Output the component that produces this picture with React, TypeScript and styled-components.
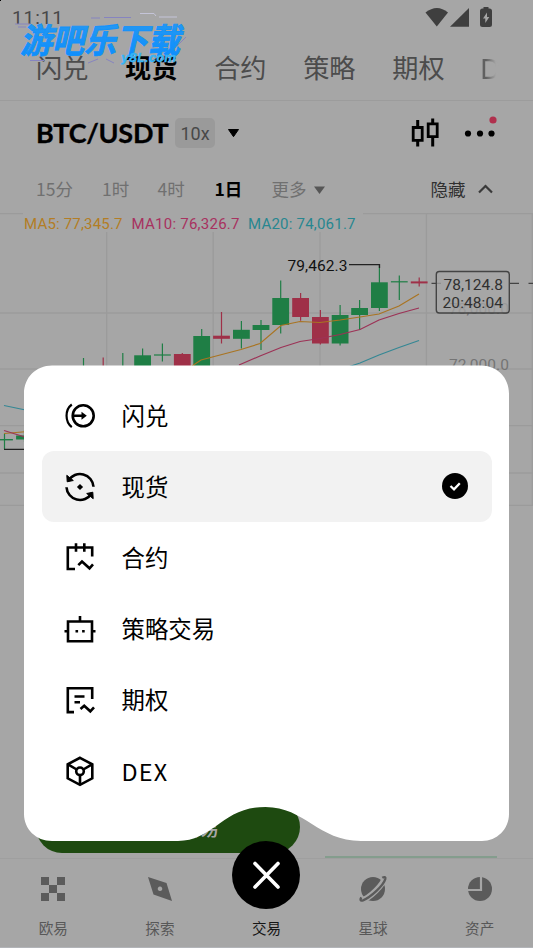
import React from "react";
import styled, { createGlobalStyle } from "styled-components";

const CJK = '"Noto Sans CJK SC", sans-serif';
const LATIN = 'Lato, "Noto Sans CJK SC", sans-serif';

const GlobalStyle = createGlobalStyle`
  * { box-sizing: border-box; }
  html, body { margin: 0; padding: 0; background: #a6a6a6; }
  body { font-family: ${CJK}; overflow: hidden; }
  svg { display: block; flex: none; }
`;

const Phone = styled.main`
  position: relative;
  width: 533px;
  height: 948px;
  display: flex;
  flex-direction: column;
  overflow: hidden;
  background: #a6a6a6;
  color: #000;
`;

const StatusBar = styled.header`
  height: 36px;
  flex: none;
  display: flex;
  justify-content: space-between;
  padding: 0 40px 0 12px;
`;

const Clock = styled.span`
  font: 400 19px/36px Roboto, sans-serif;
  letter-spacing: 0.9px;
  color: #484848;
`;

const TopTabs = styled.nav`
  height: 65px;
  flex: none;
  display: flex;
  gap: 36.7px;
  padding-left: 36px;
  border-bottom: 1px solid #9c9c9c;
`;

const TopTab = styled.span<{ $active?: boolean }>`
  flex: none;
  font-size: 26.2px;
  line-height: 62px;
  font-weight: ${(p) => (p.$active ? 700 : 400)};
  color: ${(p) => (p.$active ? "#000" : "#4c4c4c")};
`;

const FadedTab = styled(TopTab)`
  margin-left: -1px;
  font-family: ${LATIN};
  line-height: 66px;
  background: linear-gradient(90deg, #606060 30%, #a6a6a6 80%);
  background-clip: text;
  -webkit-background-clip: text;
  color: transparent;
`;

const PairBar = styled.section`
  height: 64px;
  flex: none;
  display: flex;
  align-items: center;
  padding: 0 36px;
`;

const PairName = styled.h1`
  margin: 0;
  width: 139px;
  font: 700 27px/38px ${LATIN};
  letter-spacing: -0.25px;
  white-space: nowrap;
  -webkit-text-stroke: 0.3px #000;
`;

const Leverage = styled.span`
  width: 40px;
  height: 30px;
  margin-right: 12px;
  border-radius: 5px;
  background: #9a9a9a;
  color: #484848;
  text-align: center;
  font: 400 18px/31px Roboto, sans-serif;
`;

const PairActions = styled.div`
  margin-left: auto;
  display: flex;
  align-items: center;
  gap: 24px;
`;

const Intervals = styled.section`
  height: 48px;
  flex: none;
  display: grid;
  grid-template-columns: 66px 55.5px 57px 57px 159px auto;
  align-items: center;
  padding: 0 0 0 36px;
`;

const Interval = styled.span<{ $tone?: "active" | "dark" }>`
  display: flex;
  align-items: center;
  gap: 7px;
  font-size: 17.5px;
  line-height: 24px;
  font-weight: ${(p) => (p.$tone === "active" ? 700 : 400)};
  color: ${(p) => (p.$tone === "active" ? "#000" : p.$tone === "dark" ? "#303030" : "#707070")};
`;

const Chart = styled.svg`
  width: 533px;
  height: 588px;
`;

const OrderArea = styled.section`
  height: 57px;
  flex: none;
  display: flex;
  justify-content: space-between;
  align-items: flex-end;
  padding: 0 36px;
`;

const BuyButton = styled.div`
  width: 264px;
  height: 52px;
  margin-bottom: 5px;
  border-radius: 26px;
  background: #1e4a10;
  color: #a6a6a6;
  font-size: 20px;
  line-height: 54px;
  font-weight: 500;
  padding-right: 81px;
  text-align: right;
`;

const DepthBar = styled.div`
  width: 172px;
  height: 2.5px;
  background: #849d8d;
`;

const BottomNav = styled.nav`
  height: 90px;
  flex: none;
  display: grid;
  grid-template-columns: repeat(5, 1fr);
  border-top: 1px solid #9f9f9f;
  border-bottom: 1px solid #b2b4b8;
`;

const NavItem = styled.div<{ $active?: boolean }>`
  display: flex;
  flex-direction: column;
  align-items: center;
  padding-top: 14px;
  font-size: 14.6px;
  line-height: 21px;
  color: ${(p) => (p.$active ? "#161616" : "#585858")};
`;

const NavIcon = styled.svg`
  width: 32px;
  height: 32px;
  margin-bottom: 12px;
  fill: #5b5b5b;
`;

const Menu = styled.div`
  position: absolute;
  left: 24px;
  top: 365px;
  width: 485px;
  height: 476px;
  padding: 15px 17.5px 0;
  background: #fff;
  clip-path: path(
    "M28 0.5H457C473 0.5 485 12.5 485 28.5V449C485 464 473 476 458 476H337C294 476 281 442 241.500 442C198 442 190 476 154 476H28C12 476 0 464 0 449V28.5C0 12.5 12 0.5 28 0.5Z"
  );
`;

const MenuRow = styled.div<{ $selected?: boolean }>`
  height: 71.2px;
  display: flex;
  align-items: center;
  padding: 0 24px 0 22.5px;
  border-radius: 12px;
  background: ${(p) => (p.$selected ? "#f2f2f2" : "transparent")};
`;

const MenuIcon = styled.svg`
  width: 32px;
  height: 32px;
  fill: none;
  stroke: #000;
  stroke-width: 2.6;
`;

const MenuLabel = styled.span<{ $latin?: boolean }>`
  flex: 1;
  margin-left: 25.5px;
  padding-bottom: 2px;
  font-size: 23.4px;
  line-height: 34px;
  letter-spacing: ${(p) => (p.$latin ? "1.2px" : "0")};
`;

const CloseButton = styled.div`
  position: absolute;
  left: 232px;
  top: 841px;
  width: 68px;
  height: 68px;
  border-radius: 50%;
  background: #000;
`;

const Watermark = styled.svg`
  position: absolute;
  left: 15px;
  top: 8px;
`;

const CornerMark = styled.i`
  position: absolute;
  left: 0;
  top: 0;
  width: 1px;
  height: 1px;
  background: #000;
`;

const GREEN = "#1f7e45";
const RED = "#9f3048";

type Candle = [center: number, high: number, low: number, top: number, bottom: number, color: string];

const candles: Candle[] = [
  [4.5, 434, 449, 439, 440.4, GREEN],
  [24.5, 430, 442, 435.5, 439.5, GREEN],
  [83.5, 358, 380, 366, 380, GREEN],
  [103.2, 357.5, 380, 366, 380, RED],
  [122.8, 353, 380, 366, 380, GREEN],
  [142.6, 348.5, 380, 355.3, 380, GREEN],
  [162.4, 343.5, 361.5, 354.4, 355.6, GREEN],
  [182.3, 353, 380, 354, 380, RED],
  [201.7, 329, 380, 336, 380, GREEN],
  [221.5, 312, 343.5, 335.7, 338.8, RED],
  [241.4, 321, 348.5, 329.8, 338.8, GREEN],
  [261, 320, 350, 325, 330, GREEN],
  [280.7, 280.5, 333.5, 298, 325, GREEN],
  [300.6, 293, 320.7, 298, 317, RED],
  [320.4, 310, 344.5, 317, 343.5, RED],
  [340.1, 305, 345.5, 315, 343.5, GREEN],
  [359.6, 300, 330, 308, 315, GREEN],
  [379.4, 264.5, 311, 282.3, 308, GREEN],
  [399.3, 275.5, 300, 281.2, 282.4, GREEN],
  [419.2, 277.5, 286.5, 281.4, 283.4, RED],
];

const averages = [
  { color: "#a97422", points: "192,366 201,360 241,349.500 260,343.500 281,325.500 300,321.500 320,322.500 340,320 360,317 379,314 399,306 419,294" },
  { color: "#a97422", points: "4,433.500 28,431.500" },
  { color: "#9c3256", points: "239,365 260,356 281,347.500 300,341.500 320,338.500 340,334.500 360,329.500 379,320 399,313.500 419,308" },
  { color: "#9c3256", points: "4,430.500 28,438" },
  { color: "#348794", points: "348,367 360,363 379,355 399,347.500 419,340.500" },
  { color: "#348794", points: "4,405.500 28,410.500" },
];

const legends = [
  { x: 24, width: 98.5, color: "#b37d24", text: "MA5: 77,345.7" },
  { x: 131.5, width: 108, color: "#a83260", text: "MA10: 76,326.7" },
  { x: 248, width: 107.5, color: "#288690", text: "MA20: 74,061.7" },
];

function PriceChart() {
  return (
    <Chart viewBox="0 213 533 588" fontFamily="Roboto, sans-serif" fontSize="15.500">
      <g stroke="#9b9b9b" strokeWidth="1.300">
        {[213.5, 313, 369, 425.6, 473, 505.4].map((y) => (
          <line key={y} x1="0" x2="533" y1={y} y2={y} />
        ))}
        {[106.7, 213.2, 320, 426.4, 532.3].map((x) => (
          <line key={x} x1={x} x2={x} y1="213" y2="505" />
        ))}
      </g>
      <rect x="23" y="213" width="340" height="19" fill="#a6a6a6" />
      {legends.map((l) => (
        <text key={l.x} x={l.x} y="229.300" fill={l.color} fontSize="15" textLength={l.width}>
          {l.text}
        </text>
      ))}
      {candles.map(([x, high, low, top, bottom, color]) => (
        <g key={x} fill={color}>
          <rect x={x - 0.6} y={high} width="1.200" height={low - high} />
          <rect x={x - 8.4} y={top} width="16.800" height={bottom - top} />
        </g>
      ))}
      {averages.map((a) => (
        <polyline key={a.points} points={a.points} fill="none" stroke={a.color} strokeWidth="1.200" />
      ))}
      <path d="M4 449.300H30M349 264.700H379.500V268" fill="none" stroke="#222" strokeWidth="1.300" />
      <text x="287.500" y="270.700" fill="#111" textLength="60">79,462.3</text>
      <text x="449" y="370" fill="#747474" textLength="60">72,000.0</text>
      <text x="449" y="314" fill="#747474" textLength="60">78,000.0</text>
      <path d="M431.500 283.300H441M510 283.300H519M528.500 283.300H533" stroke="#444" strokeWidth="1.300" />
      <rect x="436.300" y="271.500" width="73" height="41.500" rx="3" fill="#a6a6a6" fillOpacity=".75" stroke="#444" strokeWidth="1.400" />
      <text x="443.500" y="290" fill="#303030" textLength="59.500">78,124.8</text>
      <text x="442.500" y="307.500" fill="#303030" textLength="60.500">20:48:04</text>
    </Chart>
  );
}

const menuItems = [
  {
    label: "闪兑",
    icon: (
      <>
        <circle cx="19.200" cy="15.800" r="10.500" />
        <path d="M7.800 4.500C.8 9.800 .8 21.800 7.800 27.100" strokeWidth="2.200" />
        <path d="M9 15.800H19" />
        <path d="M17.500 11.800L22.800 15.800L17.500 19.800Z" fill="#000" stroke="none" />
      </>
    ),
  },
  {
    label: "现货",
    selected: true,
    icon: (
      <>
        <path d="M4.500 9.500A13.500 13.500 0 0 1 29.500 15.800" />
        <path d="M27.500 22.500A13.500 13.500 0 0 1 2.500 16.200" />
        <path d="M2.800 4.300L3.200 10.800L9.300 9.500ZM29.200 27.700L28.800 21.200L22.700 22.500Z" fill="#000" strokeWidth="1" />
        <path d="M16 12.900L19.100 16L16 19.100L12.900 16Z" fill="#000" stroke="none" />
      </>
    ),
  },
  {
    label: "合约",
    icon: (
      <>
        <path d="M11 27H3.800V5.500H28.200V14.500" />
        <path d="M12 1.300V9.800M20.300 1.300V9.800M14.300 23.200L18 19.500L25.500 26.300L29 22.300" />
      </>
    ),
  },
  {
    label: "策略交易",
    icon: (
      <>
        <path d="M4 8.500H28V28.300H4ZM.5 18.300H4M28 18.300H31.500M16 3V8.500" />
        <path d="M11.500 18.300H14.100M18.100 18.300H20.700" />
      </>
    ),
  },
  {
    label: "期权",
    icon: (
      <>
        <path d="M10 28.100H3.800V4.300H28.200V15" />
        <path d="M10.500 12.500H20.500M10.500 18.300H16M16.500 25L20.200 21.800L26.300 27.300L30 23.300" />
      </>
    ),
  },
  {
    label: "DEX",
    icon: (
      <>
        <path d="M16 1.800L28.300 8.300V22.300L16 28.800L3.700 22.300V8.300Z" />
        <circle cx="16" cy="15.300" r="3.800" />
        <path d="M4 8.300L12.700 13.500M28 8.300L19.300 13.500M16 19.300V28.300" />
      </>
    ),
  },
];

const navItems = [
  { label: "欧易", icon: <path d="M4 4h8v8H4zM20 4h8v8h-8zM12 12h8v8h-8zM4 20h8v8H4zM20 20h8v8h-8z" /> },
  { label: "探索", icon: <path fillRule="evenodd" d="M4 4L22.500 10L28 28L9.500 21.500ZM16 13.500a2.300 2.300 0 1 0 .01 0z" /> },
  { label: "交易", active: true, icon: null },
  {
    label: "星球",
    icon: (
      <>
        <circle cx="16" cy="16" r="12" />
        <path d="M4.500 27.500C13 25 26 12 28 4.500" fill="none" stroke="#a6a6a6" strokeWidth="5.800" />
        <path
          d="M4.300 24.300C3 26.500 3.300 28.300 6 27.300C14 24 26.500 12.500 28.300 6C28.800 4 27.500 3.500 25.300 4.800"
          fill="none"
          stroke="#5b5b5b"
          strokeWidth="2.400"
        />
      </>
    ),
  },
  {
    label: "资产",
    icon: (
      <>
        <circle cx="16" cy="16" r="12" />
        <path d="M17 3V17H3" fill="none" stroke="#a6a6a6" strokeWidth="2.200" />
      </>
    ),
  },
];

export default function App() {
  return (
    <>
      <GlobalStyle />
      <Phone>
        <StatusBar>
          <Clock>11:11</Clock>
          <svg width="68" height="36" viewBox="425 0 68 36" fill="#3f3f3f">
            <path d="M425.500 12.500Q437 3.500 448 12.500L436.800 26.500Z" />
            <path d="M469 8V26.700H450Z" />
            <path d="M482.500 8.500H483.500V7H488.500V8.500H489.500Q492 8.500 492 11V24.500Q492 27 489.500 27H482.500Q480 27 480 24.500V11Q480 8.500 482.500 8.500Z" />
            <path d="M487 12.500L483 18.500H485.300V23L489.300 17H487Z" fill="#a6a6a6" />
          </svg>
        </StatusBar>

        <TopTabs>
          <TopTab>闪兑</TopTab>
          <TopTab $active>现货</TopTab>
          <TopTab>合约</TopTab>
          <TopTab>策略</TopTab>
          <TopTab>期权</TopTab>
          <FadedTab>D</FadedTab>
        </TopTabs>

        <PairBar>
          <PairName>BTC/USDT</PairName>
          <Leverage>10x</Leverage>
          <svg width="13" height="10" viewBox="0 0 13 10">
            <path d="M1.500 1.500H11.500L6.500 8.700Z" stroke="#000" strokeLinejoin="round" />
          </svg>
          <PairActions>
            <svg width="30" height="30" viewBox="0 0 30 30" fill="none" stroke="#000" strokeWidth="2.800">
              <path d="M3.200 9.500H12.200V22.300H3.200ZM18.200 5.800H27.200V18.700H18.200Z" />
              <path d="M7.700 2V9.500M7.700 22.300V28.500M22.700.5V5.800M22.700 18.700V28.500" strokeWidth="3" />
            </svg>
            <svg width="33" height="36" viewBox="0 0 33 36">
              <circle cx="4" cy="18.500" r="3.100" />
              <circle cx="16" cy="18.500" r="3.100" />
              <circle cx="27.500" cy="18.500" r="3.100" />
              <circle cx="29" cy="5" r="3.600" fill="#b0304d" />
            </svg>
          </PairActions>
        </PairBar>

        <Intervals>
          <Interval>15分</Interval>
          <Interval>1时</Interval>
          <Interval>4时</Interval>
          <Interval $tone="active">1日</Interval>
          <Interval>
            更多
            <svg width="11" height="10" viewBox="0 0 11 10">
              <path d="M0 2.500H11L5.500 10Z" fill="#565656" />
            </svg>
          </Interval>
          <Interval $tone="dark">
            隐藏
            <svg width="26" height="12" viewBox="0 0 26 12">
              <path d="M6 9.500L12.500 3L19 9.500" fill="none" stroke="#3a3a3a" strokeWidth="2.200" />
            </svg>
          </Interval>
        </Intervals>

        <PriceChart />

        <OrderArea>
          <BuyButton>交易</BuyButton>
          <DepthBar />
        </OrderArea>

        <BottomNav>
          {navItems.map((item) => (
            <NavItem key={item.label} $active={item.active}>
              <NavIcon viewBox="0 0 32 32">{item.icon}</NavIcon>
              {item.label}
            </NavItem>
          ))}
        </BottomNav>

        <Menu>
          {menuItems.map((item) => (
            <MenuRow key={item.label} $selected={item.selected}>
              <MenuIcon viewBox="0 0 32 32">{item.icon}</MenuIcon>
              <MenuLabel $latin={item.label === "DEX"}>{item.label}</MenuLabel>
              {item.selected && (
                <svg width="26" height="27" viewBox="0 0 26 27">
                  <circle cx="13" cy="13" r="13" />
                  <path d="M8.500 13L12 16.300L17.800 10.300" fill="none" stroke="#fff" strokeWidth="2.300" />
                </svg>
              )}
            </MenuRow>
          ))}
        </Menu>

        <CloseButton>
          <svg width="68" height="68" viewBox="0 0 68 68" stroke="#fff" strokeWidth="3.600" strokeLinecap="round">
            <path d="M23 22.500L46 46M46 22.500L23 46" />
          </svg>
        </CloseButton>

        <Watermark width="180" height="64" viewBox="15 8 180 64">
          <defs>
            <linearGradient id="brand" x1="0" y1="0" x2="0" y2="1">
              <stop offset="0" stopColor="#2a9bf0" />
              <stop offset="1" stopColor="#0a8cff" />
            </linearGradient>
          </defs>
          <path d="M14 24H30M18 27H26M91 18H100M104 17.500H131M177 46L186 37M30 60.500H44M88 63L98 59M106 59L114 63" fill="none" stroke="#8684c0" strokeWidth="1" />
          <path d="M140 13.500H154L156 16M159 17H177" fill="none" stroke="#c4c4d8" strokeWidth="1" />
          <g transform="translate(20 52.500) skewX(-13)">
            <text x="0" y="0" fill="url(#brand)" stroke="#1192fa" strokeWidth=".9" fontFamily="Noto Sans CJK SC" fontWeight="700" fontSize="34" textLength="160" lengthAdjust="spacingAndGlyphs">
              游吧乐下载
            </text>
          </g>
          <text x="121" y="61.500" fill="#35b4f6" stroke="#35b4f6" strokeWidth=".3" fontFamily="Inter" fontWeight="700" fontStyle="italic" fontSize="12" textLength="55" lengthAdjust="spacingAndGlyphs">
            y8L.com
          </text>
        </Watermark>
        <CornerMark />
      </Phone>
    </>
  );
}
